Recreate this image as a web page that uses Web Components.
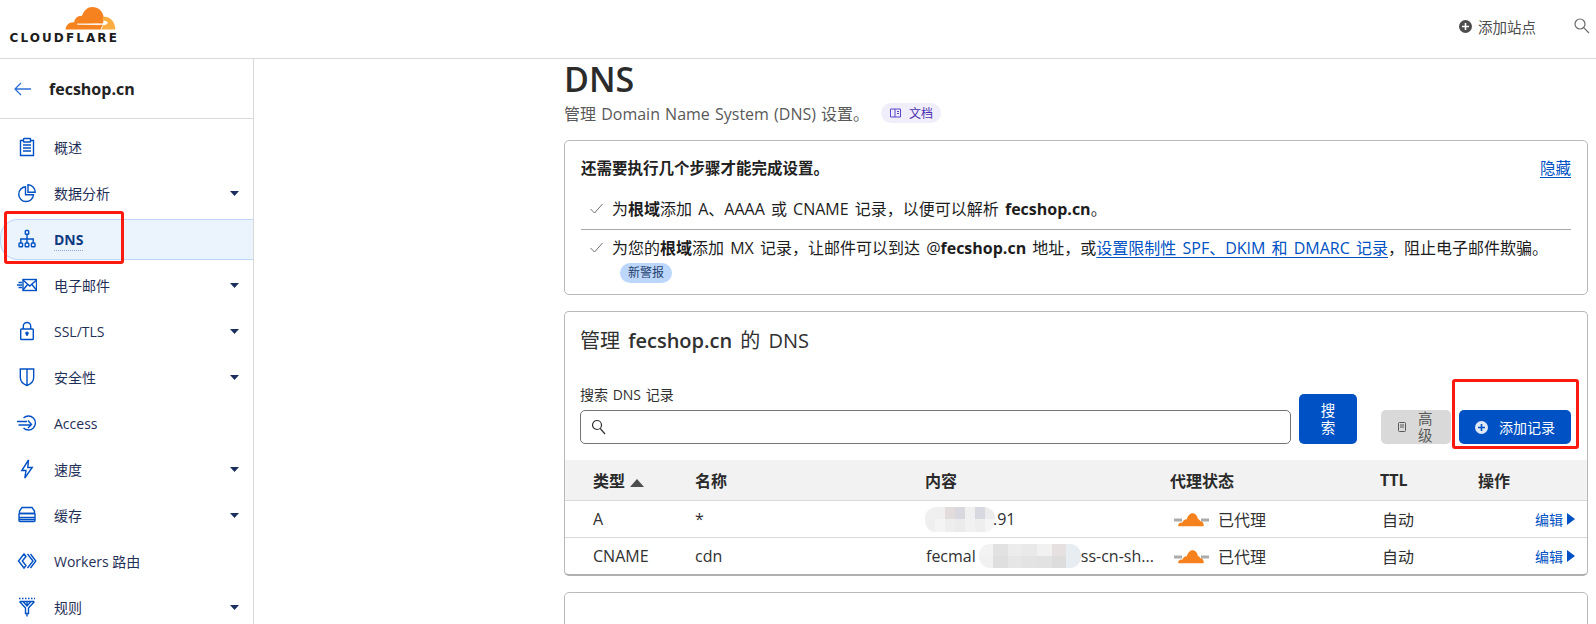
<!DOCTYPE html>
<html lang="zh"><head><meta charset="utf-8"><title>DNS</title>
<style>
html,body{margin:0;height:624px;overflow:hidden;background:#fff}
body{font-family:"Open Sans","Noto Sans CJK SC",sans-serif;color:#313131}
</style></head><body>
<cf-app></cf-app>
<script>
const FONT='"Open Sans","Noto Sans CJK SC",sans-serif';
const NAV_ICONS={
 overview:'<path d="M6.500 3.500H3.500v15h13v-15h-3"/><rect x="6.500" y="1.500" width="7" height="3.500" rx=".6"/><path d="M6 8h8M6 11h8M6 14h8"/>',
 analytics:'<path d="M8.500 3.800a7.400 7.400 0 1 0 8 8H8.500z"/><path d="M11 1.800v7.400h7.200A7.400 7.400 0 0 0 11 1.800z"/>',
 dns:'<rect x="8.300" y="1.500" width="3.400" height="3.800" rx=".8"/><rect x="2" y="14" width="3.600" height="3.800" rx=".8"/><rect x="8.200" y="14" width="3.600" height="3.800" rx=".8"/><rect x="14.400" y="14" width="3.600" height="3.800" rx=".8"/><path d="M10 5.300V14M3.800 14v-4h12.400v4"/>',
 email:'<rect x="6" y="4.500" width="13.500" height="11" /><path d="M6 5l6.750 6L19.500 5M6 15l5-6M19.500 15l-5-6M1.500 7.500h3.500M0 10h5M1.500 12.500h3.500"/>',
 lock:'<rect x="3.700" y="8" width="12.600" height="10.500" rx=".8"/><path d="M6.300 8V5.200a3.700 3.700 0 0 1 7.400 0V8"/><circle cx="10" cy="12.300" r="1.100" fill="#0051c3"/><path d="M10 12.500v2.500"/>',
 shield:'<path d="M3.300 2h13.400v8.500c0 3.700-3 6.500-6.700 8-3.700-1.500-6.700-4.300-6.700-8z"/><path d="M10 2v16"/>',
 access:'<path d="M6.500 5a7 7 0 1 1 0 10"/><path d="M0 8.500h10M1.500 12h12.500M11 7.500l3.500 4-3.500 3.500"/>',
 speed:'<path d="M11.500 1L4.800 11.500H9L7.800 19 15.200 8.500H10.800l.7-7.500z"/>',
 cache:'<path d="M2.500 8.500V6L5 2.500h10L17.500 6v2.500z"/><rect x="2" y="8.500" width="16" height="4" rx=".8"/><path d="M2 12.500v3a1 1 0 0 0 1 1h14a1 1 0 0 0 1-1v-3M2 14.500h16"/>',
 workers:'<path d="M7 3L1.500 10 7 17l2-2.500L5.300 10 9 5.500zM10.500 3l5.500 7-5.500 7M13.500 3l5.300 7-5.300 7"/>',
 rules:'<path d="M2 1.500h16" stroke-dasharray="1.500 1.500"/><path d="M2.500 4.500L8.500 11v5.500h3V11l6-6.500M6 4.500l4 4.500 4-4.500M10 4.500V9M3 4.500h14M10 16.500V19.500"/>'
};
const CARET='<svg width="9" height="5" viewBox="0 0 9 5"><path d="M0 0h9L4.500 5z" fill="#1b2f5e"/></svg>';
const proxyCloud='<svg width="36" height="15" viewBox="0 0 36 15"><path d="M0 8h8M27 8h8" stroke="#ababab" stroke-width="3"/><path d="M4 14.200c0-2.700 2-4 4.500-3.700C9.500 8 11 7 12.800 7.300 14 3 16.500 1.200 18.500 1.200c3 0 5 2.500 5.300 5.800 1.200.2 2.200 1 2.500 2.300 2-.4 3.500 1.800 3.500 4.200 0 .4-.3.7-1 .7H5c-.6 0-1-.3-1-.7z" fill="#f6821f"/></svg>';
function define(name,css,html,init){
 customElements.define(name,class extends HTMLElement{
  connectedCallback(){
   if(this.shadowRoot)return;
   const r=this.attachShadow({mode:'open'});
   r.innerHTML='<style>'+css+'</style>'+(typeof html==='function'?html(this):html);
   if(init)init(this,r);
  }
 });
}
define('cf-logo',`:host{display:block;width:106px;height:40px}
 .w{display:flex;flex-direction:column;align-items:flex-end}
 svg{display:block;margin-right:1px}
 span{font:700 12px/11px "DejaVu Sans",sans-serif;letter-spacing:2.100px;color:#1c1c1c;margin-top:3px;white-space:nowrap;margin-right:-2px}`,
`<div class="w"><svg width="51" height="23" viewBox="0 0 52 24">
 <path d="M0 23.500C.5 18.500 4 15.500 9 16 9.500 11.500 13 8.500 17 9.500 19 3.500 23 0 28 0c6 0 10.500 4 11.500 9.500.3 1.500.3 3 0 4.500-.3 2-.5 3-1.200 5-.7 2-1 3-1.800 4.500z" fill="#f6821f"/>
 <path d="M12 17.900L34 17.400l6 .4-6 .6z" fill="#fff" stroke="#fff" stroke-width=".7"/>
 <path d="M38.500 10.500c1-.2 2-.3 2.500-.2 6 .5 10.500 5 11 13.200H37.200c1-1.500 1.600-3 1.500-4.500 2 0 4-.5 5-1.800 1-1.200-1-2.500-2.500-2.800-1-.3-2-.5-3-.5.300-1 .500-2 .800-3.400z" fill="#fbad41"/>
 </svg><span>CLOUDFLARE</span></div>`);
define('cf-header',`:host{display:flex;box-sizing:border-box;height:59px;border-bottom:1px solid #d9d9d9;align-items:flex-start;justify-content:space-between;padding:7px 6px 0 11px;font-family:${FONT}}
 .r{display:flex;align-items:center;height:38px;color:#4d4d4d;font-size:14.500px}
 .add{display:flex;align-items:center;gap:6px;margin-right:38px}`,
`<cf-logo></cf-logo><div class="r"><span class="add"><svg width="13" height="13" viewBox="0 0 13 13"><circle cx="6.500" cy="6.500" r="6.500" fill="#4d4d4d"/><path d="M3 6.500h7M6.500 3v7" stroke="#fff" stroke-width="1.600"/></svg>添加站点</span>
 <svg width="16" height="16" viewBox="0 0 16 16" fill="none" stroke="#6b6b6b" stroke-width="1.200"><circle cx="6" cy="6" r="5"/><path d="M9.700 9.700L15 15"/></svg></div>`);
define('nav-item',`:host{display:flex;height:46px;align-items:center;font-size:14px;color:#1f3057;font-family:${FONT}}
 .p{flex:1;height:41px;display:flex;align-items:center;box-sizing:border-box;padding-left:16px;padding-right:14px;border:1px solid transparent;border-right:0;border-radius:18px 0 0 18px}
 :host([active]) .p{background:#ebf3fd;border-color:#bcd7fb}
 :host([active]) .t{font-weight:700;color:#0e3a80;border-bottom:1px dotted #8aa6cf;line-height:18px;padding-bottom:1px;margin-top:4px}
 svg.i{width:20px;height:20px;flex:none;fill:none;stroke:#0051c3;stroke-width:1.400;margin-right:17px}
 .t{flex:1 1 auto;white-space:nowrap}
 :host([active]) .t{flex:0 0 auto}
 .c{margin-left:auto;display:flex}`,
h=>`<div class="p"><svg class="i" viewBox="0 0 20 20">${NAV_ICONS[h.getAttribute('icon')]}</svg><span class="t"><slot></slot></span>${h.hasAttribute('caret')?`<span class="c">${CARET}</span>`:''}</div>`);
define('cf-sidebar',`:host{display:block;flex:none;width:254px;box-sizing:border-box;border-right:1px solid #d9d9d9;height:565px;overflow:hidden;font-family:${FONT}}
 .b{display:flex;align-items:center;height:60px;box-sizing:border-box;border-bottom:1px solid #d9d9d9;padding-left:14px;gap:18px;font-weight:700;font-size:16px;color:#222}
 nav{padding-top:5px}`,
`<div class="b"><svg width="17" height="14" viewBox="0 0 17 14" fill="none" stroke="#2f6fd6" stroke-width="1.300"><path d="M17 7H1M7 1L1 7l6 6"/></svg><span>fecshop.cn</span></div>
 <nav><slot></slot></nav>`);
define('doc-badge',`:host{display:inline-flex;align-items:center;gap:8px;height:20px;padding:0 8px 0 9px;border-radius:10px;background:#f1eefc;color:#4a2fb0;font-size:12px;margin-left:12px;word-spacing:0}`,
`<svg width="11" height="10" viewBox="0 0 11 10" fill="none" stroke="#5b45c9" stroke-width="1"><path d="M.5 1h4.500v8H.5zM5 1h5.500v8H5M7 3.500h2M7 5.500h2"/></svg><slot></slot>`);
define('new-badge',`:host{display:inline-flex;align-items:center;height:20px;padding:0 8px;border-radius:10px;background:#bcd7fb;color:#24406f;font-size:12px;margin-left:8px}`,`<slot></slot>`);
define('setup-row',`:host{display:flex;font-size:16px;word-spacing:2px;line-height:24px;color:#1d1d1d;padding-left:9px;white-space:nowrap}
 svg{flex:none;margin:6px 9px 0 0}
 .m{display:flex;flex-direction:column}
 .s{margin-top:3px;height:20px;line-height:0}`,
h=>`<svg width="13" height="11" viewBox="0 0 13 11" fill="none" stroke="#6e6e6e" stroke-width="1"><path d="M.5 6l4 4L12.500 1"/></svg><div class="m"><div><slot></slot></div>${h.hasAttribute('badged')?'<div class="s"><slot name="badge"></slot></div>':''}</div>`);
define('setup-card',`:host{display:block;box-sizing:border-box;height:155px;border:1px solid #b9b9b9;border-radius:5px;padding:15px 16px 0;margin-top:15px}
 .h{display:flex;justify-content:space-between;line-height:24px;font-size:15.500px}
 .h b{font-weight:700;color:#222}
 a{color:#0051c3;text-decoration:underline;text-underline-offset:3px;font-size:15.500px}
 .l{margin-top:17px;border-bottom:1px solid #a8a8a8;padding-bottom:8px;margin-bottom:6px}`,
`<div class="h"><b>还需要执行几个步骤才能完成设置。</b><a>隐藏</a></div>
 <div class="l"><slot name="one"></slot></div><slot name="two"></slot>`);
define('blur-patch',`:host{display:inline-grid;grid-auto-flow:row;overflow:hidden;vertical-align:middle;border-radius:11px;flex:none}
 i{display:block}`,
h=>{const cols=h.getAttribute('cells').split('|').map(r=>r.split(','));
 const w=+h.getAttribute('w'),hh=+h.getAttribute('h');
 h.style.cssText+=`;width:${w}px;height:${hh}px;grid-template-columns:repeat(${cols[0].length},1fr);grid-template-rows:repeat(${cols.length},1fr)`;
 return cols.flat().map(c=>`<i style="background:${c}"></i>`).join('');});
define('dns-row',`:host{display:grid;grid-template-columns:102px 230px 245px 210px 98px 1fr;align-items:center;box-sizing:border-box;height:37px;border-top:1px solid #d9d9d9;padding-left:28px;font-size:16px;color:#313131;white-space:nowrap}
 :host([head]){height:40px;background:#f2f2f2;border-top:0;font-weight:600;color:#2b2b2b}`,
`<slot></slot>`);
define('proxy-cell',`:host{display:flex;align-items:center;gap:8px;padding-left:4px}svg{flex:none}`,proxyCloud+'<slot></slot>');
define('edit-link',`:host{display:flex;align-items:center;justify-content:flex-end;gap:4px;padding-right:12px;color:#0051c3;font-size:14px;font-weight:400}`,
`<slot></slot><svg width="8" height="12" viewBox="0 0 8 12"><path d="M0 0l8 6-8 6z" fill="#0051c3"/></svg>`);
define('dns-card',`:host{display:block;box-sizing:border-box;height:265px;border:1px solid #b9b9b9;border-bottom:2px solid #b0b0b0;border-radius:5px;margin-top:16px;overflow:hidden;padding-top:15px}
 h2{margin:0 15px;font-size:20px;line-height:28px;font-weight:400;color:#313131;word-spacing:3px}
 h2 b{font-weight:600}
 .tb{display:flex;align-items:flex-end;margin:30px 16px 16px 15px}
 .f{flex:1;display:flex;flex-direction:column;gap:5px;font-size:14px;word-spacing:1px;line-height:20px;color:#313131}
 .in{display:flex;align-items:center;height:34px;box-sizing:border-box;border:1px solid #757575;border-radius:5px;padding-left:10px}
 .btn{box-sizing:border-box;display:flex;align-items:center;justify-content:center;border-radius:5px;font-size:14px;line-height:17px;background:#0051c3;color:#fff}
 .s{width:58px;height:50px;margin-left:8px;text-align:center}
 .s span,.a span{width:1em;display:block;font-size:14.500px}
 .a{width:70px;height:34px;margin-left:24px;background:#d9d9d9;color:#595959;gap:12px;justify-content:flex-start;padding-left:17px}
 .p{width:112px;height:34px;margin-left:8px;gap:11px;white-space:nowrap}`,
`<h2>管理 <b>fecshop.cn</b> 的 DNS</h2>
 <div class="tb"><div class="f"><span>搜索 DNS 记录</span><div class="in"><svg width="15" height="16" viewBox="0 0 15 16" fill="none" stroke="#313131" stroke-width="1.200"><circle cx="6" cy="6" r="4.500"/><path d="M9.200 9.500L14 15"/></svg></div></div>
 <div class="btn s"><span>搜索</span></div>
 <div class="btn a"><svg width="8" height="10" viewBox="0 0 8 10" fill="none" stroke="#595959"><rect x=".5" y=".5" width="7" height="9" rx="1"/><path d="M2 3h4M2 5h4"/></svg><span>高级</span></div>
 <div class="btn p"><svg width="13" height="13" viewBox="0 0 13 13"><circle cx="6.500" cy="6.500" r="6.500" fill="#dfe9f8"/><path d="M3 6.500h7M6.500 3v7" stroke="#0051c3" stroke-width="1.600"/></svg>添加记录</div></div>
 <slot></slot>`);
define('dns-main',`:host{display:block;flex:1;min-width:0;padding:0 8px 0 310px;font-family:${FONT};color:#313131}
 h1{margin:0;font-size:34px;line-height:40px;font-weight:600;color:#2b2b2b}
 .d{display:flex;align-items:center;margin-top:2px;height:24px;font-size:16px;word-spacing:1px;color:#595959;white-space:nowrap}
 .e{height:200px;border:1px solid #b9b9b9;border-radius:5px;margin-top:16px}`,
`<h1>DNS</h1><div class="d">管理 Domain Name System (DNS) 设置。<doc-badge>文档</doc-badge></div><slot></slot><div class="e"></div>`);
define('red-box',`:host{display:block;position:absolute;box-sizing:border-box;border:3px solid #fa1a10;border-radius:3px;pointer-events:none}`,``,
h=>{h.style.left=h.getAttribute('l')+'px';h.style.top=h.getAttribute('t')+'px';h.style.width=h.getAttribute('w')+'px';h.style.height=h.getAttribute('h')+'px';});
define('cf-app',`:host{display:block;position:relative;width:1596px;height:624px;overflow:hidden}
 .b{display:flex;align-items:flex-start}`,
`<cf-header></cf-header><div class="b">
<cf-sidebar>
 <nav-item icon="overview">概述</nav-item>
 <nav-item icon="analytics" caret>数据分析</nav-item>
 <nav-item icon="dns" active>DNS</nav-item>
 <nav-item icon="email" caret>电子邮件</nav-item>
 <nav-item icon="lock" caret>SSL/TLS</nav-item>
 <nav-item icon="shield" caret>安全性</nav-item>
 <nav-item icon="access">Access</nav-item>
 <nav-item icon="speed" caret>速度</nav-item>
 <nav-item icon="cache" caret>缓存</nav-item>
 <nav-item icon="workers">Workers 路由</nav-item>
 <nav-item icon="rules" caret>规则</nav-item>
</cf-sidebar>
<dns-main>
 <setup-card>
  <setup-row slot="one"><span>为<b>根域</b>添加 A、AAAA 或 CNAME 记录，以便可以解析 <b>fecshop.cn</b>。</span></setup-row>
  <setup-row slot="two" badged><span>为您的<b>根域</b>添加 MX 记录，让邮件可以到达 @<b>fecshop.cn</b> 地址，或<a style="color:#0051c3;text-decoration:underline;text-underline-offset:3px">设置限制性 SPF、DKIM 和 DMARC 记录</a>，阻止电子邮件欺骗。</span><new-badge slot="badge">新警报</new-badge></setup-row>
 </setup-card>
 <dns-card>
  <dns-row head><span>类型 <svg width="14" height="8" viewBox="0 0 14 8" style="margin-left:1px"><path d="M0 8L7 0l7 8z" fill="#4d4d4d"/></svg></span><span>名称</span><span>内容</span><span>代理状态</span><span style="font-weight:700">TTL</span><span>操作</span></dns-row>
  <dns-row><span>A</span><span>*</span><span style="display:flex;align-items:center"><blur-patch w="70" h="25" cells="#f0f0f0,#efefef,#e2dcdc,#d8d8de,#f0f0f0,#d8d8e0,#ececec|#efefef,#f4f4f4,#eeeeee,#ebebeb,#f1f1f1,#eeeeee,#f5f5f5"></blur-patch><span style="margin-left:-2px">.91</span></span><proxy-cell>已代理</proxy-cell><span style="margin-left:2px">自动</span><edit-link>编辑</edit-link></dns-row>
  <dns-row><span>CNAME</span><span>cdn</span><span style="display:flex;align-items:center;margin-left:1px">fecmal<blur-patch w="102" h="24" style="margin:0 0 0 3px" cells="#f3f3f3,#e2e2e2,#ececec,#e9e9e9,#f1f1f1,#e6e0e0,#e8edf2|#f1f1f1,#dfdfdf,#e6e6e6,#e3e3e3,#e2e2e2,#dddddd,#e8edf2"></blur-patch>ss-cn-sh...</span><proxy-cell>已代理</proxy-cell><span style="margin-left:2px">自动</span><edit-link>编辑</edit-link></dns-row>
 </dns-card>
</dns-main></div>
<red-box l="4" t="211" w="120" h="53"></red-box>
<red-box l="1452" t="379" w="127" h="70"></red-box>`);
</script>
</body></html>
